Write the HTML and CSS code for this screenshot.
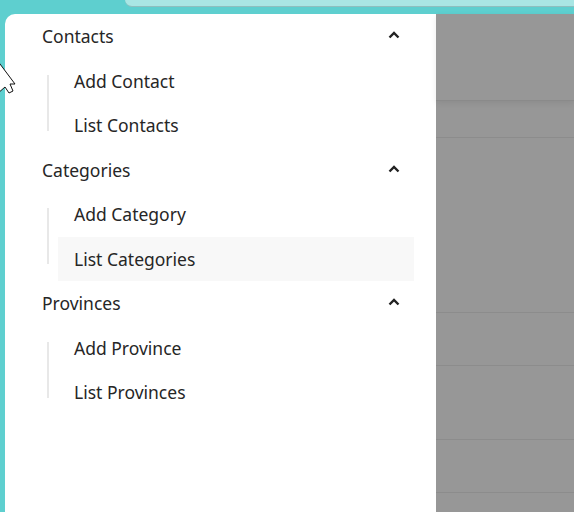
FILE: index.html
```html
<!DOCTYPE html>
<html>
<head>
<meta charset="utf-8">
<link rel="stylesheet" href="styles.css">
</head>
<body>
<div class="screen">
  <div class="topbar"><div class="tab"></div></div>
  <div class="main">
    <nav class="drawer">
      <div class="group">
        <div class="head"><span>Contacts</span><svg class="chev" viewBox="0 0 12 8"><path d="M1.5 6.5 L6 2 L10.5 6.5" fill="none" stroke="#222" stroke-width="2.4"/></svg></div>
        <div class="subs">
          <div class="item">Add Contact</div>
          <div class="item">List Contacts</div>
        </div>
      </div>
      <div class="group">
        <div class="head"><span>Categories</span><svg class="chev" viewBox="0 0 12 8"><path d="M1.5 6.5 L6 2 L10.5 6.5" fill="none" stroke="#222" stroke-width="2.4"/></svg></div>
        <div class="subs">
          <div class="item">Add Category</div>
          <div class="item active">List Categories</div>
        </div>
      </div>
      <div class="group">
        <div class="head"><span>Provinces</span><svg class="chev" viewBox="0 0 12 8"><path d="M1.5 6.5 L6 2 L10.5 6.5" fill="none" stroke="#222" stroke-width="2.4"/></svg></div>
        <div class="subs">
          <div class="item">Add Province</div>
          <div class="item">List Provinces</div>
        </div>
      </div>
    </nav>
    <div class="overlay">
      <div class="ov-head"></div>
      <div class="ov-row r1"></div>
      <div class="ov-row r2"></div>
      <div class="ov-row r3"></div>
      <div class="ov-row r4"></div>
      <div class="ov-row r5"></div>
      <div class="ov-row r6"></div>
    </div>
  </div>
  <svg class="cursor" width="20" height="40" viewBox="0 0 20 40"><polygon points="-3,0 15,24 10,24 13,31 9,33 5,27 -3,34" fill="#fff" stroke="#111" stroke-width="1"/></svg>
</div>
</body>
</html>
```
FILE: styles.css
```css
html, body { margin: 0; padding: 0; }
body { background: #5ecfcf; font-family: "Noto Sans", "Open Sans", sans-serif; }
.screen { position: relative; width: 574px; height: 512px; overflow: hidden; background: #5ecfcf; }
.topbar { height: 14px; display: flex; }
.tab { margin-left: 125px; flex: 1; height: 6px; background: #a9e6e4; border-bottom: 1px solid #8ebfbf; border-bottom-left-radius: 8px; }
.main { display: flex; height: 498px; }
.drawer { margin-left: 5px; width: 431px; background: #fff; border-top-left-radius: 10px; color: #262626; font-size: 17.5px; }
.head { height: 44.5px; display: flex; align-items: center; justify-content: space-between; padding: 0 36px 0 37px; }
.chev { width: 12px; height: 8px; margin-bottom: 2px; }
.subs { position: relative; margin: 0 22px 0 53px; }
.subs::before { content: ""; position: absolute; left: -11px; top: 16px; bottom: 17px; width: 2px; background: #e8e8e8; }
.item { height: 44.5px; display: flex; align-items: center; padding-left: 16px; }
.item.active { background: #f8f8f8; }
.overlay { flex: 1; background: #979797; display: flex; flex-direction: column; }
.ov-head { height: 86px; border-bottom: 1px solid #8a8a8a; box-shadow: 0 2px 6px rgba(0,0,0,0.08); }
.ov-row { border-bottom: 1px solid #8c8c8c; }
.r1 { height: 36px; }
.r2 { height: 174px; }
.r3 { height: 52px; }
.r4 { height: 73px; }
.r5 { height: 52px; }
.r6 { flex: 1; border-bottom: none; }
.cursor { position: absolute; left: 0; top: 60px; }
```
